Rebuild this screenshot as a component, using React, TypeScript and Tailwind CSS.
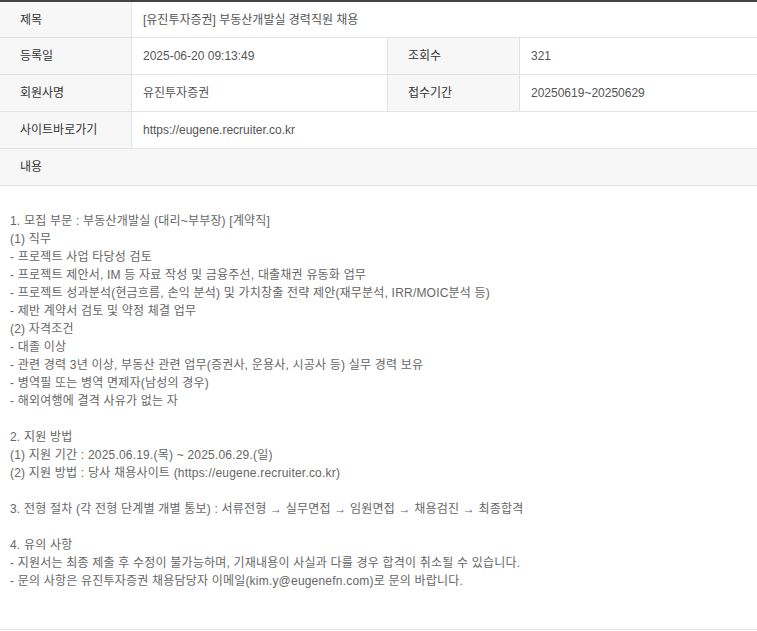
export default function App() {
  const lines = [
    '1. 모집 부문 : 부동산개발실 (대리~부부장) [계약직]',
    '(1) 직무',
    '- 프로젝트 사업 타당성 검토',
    '- 프로젝트 제안서, IM 등 자료 작성 및 금융주선, 대출채권 유동화 업무',
    '- 프로젝트 성과분석(현금흐름, 손익 분석) 및 가치창출 전략 제안(재무분석, IRR/MOIC분석 등)',
    '- 제반 계약서 검토 및 약정 체결 업무',
    '(2) 자격조건',
    '- 대졸 이상',
    '- 관련 경력 3년 이상, 부동산 관련 업무(증권사, 운용사, 시공사 등) 실무 경력 보유',
    '- 병역필 또는 병역 면제자(남성의 경우)',
    '- 해외여행에 결격 사유가 없는 자',
    '',
    '2. 지원 방법',
    '(1) 지원 기간 : 2025.06.19.(목) ~ 2025.06.29.(일)',
    '(2) 지원 방법 : 당사 채용사이트 (https://eugene.recruiter.co.kr)',
    '',
    '3. 전형 절차 (각 전형 단계별 개별 통보) : 서류전형 → 실무면접 → 임원면접 → 채용검진 → 최종합격',
    '',
    '4. 유의 사항',
    '- 지원서는 최종 제출 후 수정이 불가능하며, 기재내용이 사실과 다를 경우 합격이 취소될 수 있습니다.',
    '- 문의 사항은 유진투자증권 채용담당자 이메일(kim.y@eugenefn.com)로 문의 바랍니다.',
  ]
  const label = 'w-[132px] shrink-0 bg-[#f7f7f7] border-r border-[#e3e3e3] pl-[20px] flex items-center text-[#333]'
  const value = 'flex items-center pl-[11px] text-[#555]'
  return (
    <div className="w-[757px] h-[631px] bg-white text-[12px] overflow-hidden" style={{ fontFamily: '"Liberation Sans", "Noto Sans CJK KR", sans-serif' }}>
      <div className="border-t-2 border-[#444]">
        <div className="flex h-[36px] border-b border-[#e3e3e3]">
          <div className={label}>제목</div>
          <div className={value}>[유진투자증권] 부동산개발실 경력직원 채용</div>
        </div>
        <div className="flex h-[37px] border-b border-[#e3e3e3]">
          <div className={label}>등록일</div>
          <div className={value + ' w-[256px] border-r border-[#e3e3e3]'}>2025-06-20 09:13:49</div>
          <div className={label}>조회수</div>
          <div className={value}>321</div>
        </div>
        <div className="flex h-[37px] border-b border-[#e3e3e3]">
          <div className={label}>회원사명</div>
          <div className={value + ' w-[256px] border-r border-[#e3e3e3]'}>유진투자증권</div>
          <div className={label}>접수기간</div>
          <div className={value}>20250619~20250629</div>
        </div>
        <div className="flex h-[37px] border-b border-[#e3e3e3]">
          <div className={label}>사이트바로가기</div>
          <div className={value}>https://eugene.recruiter.co.kr</div>
        </div>
        <div className="h-[37px] bg-[#f7f7f7] border-b border-[#e3e3e3] pl-[20px] flex items-center text-[#333]">내용</div>
        <div className="h-[444px] border-b border-[#e3e3e3] pl-[10px] pt-[26px] text-[#666] leading-[18px] tracking-[0.2px]">
          {lines.map((l, i) => <div key={i} className="h-[18px]">{l}</div>)}
        </div>
      </div>
    </div>
  )
}
